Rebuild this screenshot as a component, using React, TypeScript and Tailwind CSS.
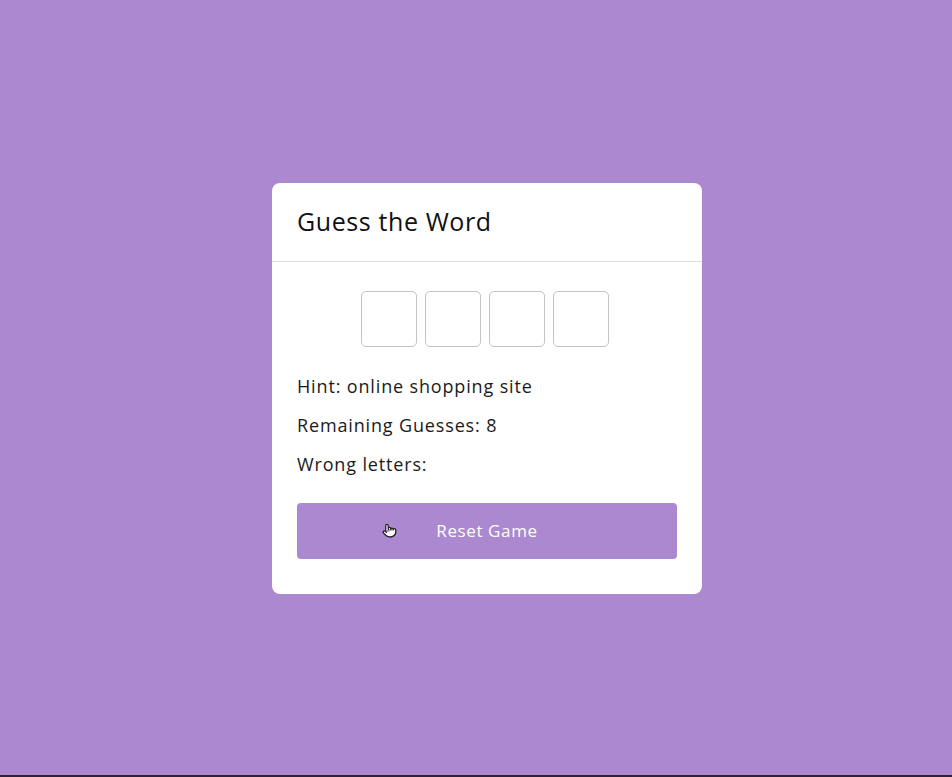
import { Pointer } from 'lucide-react';

const letters = ['', '', '', ''];

export default function App() {
    return (
        <div
            className="h-[777px] w-full bg-[#ab88cf] border-b-2 border-[#2b2433] flex items-center justify-center pl-[22px] pt-[2px]"
            style={{ fontFamily: '"Open Sans", "Noto Sans", sans-serif' }}
        >
            <div className="w-[430px] bg-white rounded-lg">
                {/* Header */}
                <div className="h-[79px] px-[25px] flex items-center border-b border-[#dddddd]">
                    <h1 className="text-[25px] font-medium text-[#111] tracking-[0.6px]">Guess the Word</h1>
                </div>

                {/* Body */}
                <div className="px-[25px] pt-[29px] pb-[35px]">
                    <div className="flex justify-center gap-2 pr-1">
                        {letters.map((l, i) => (
                            <div
                                key={i}
                                className="w-14 h-14 border border-[#c4c4c4] rounded-[5px] flex items-center justify-center text-2xl"
                            >
                                {l}
                            </div>
                        ))}
                    </div>

                    <div className="mt-[26px] text-[18px] leading-[27px] tracking-[0.85px] text-[#1a1a1a]">
                        <p>Hint: online shopping site</p>
                        <p className="mt-3">Remaining Guesses: 8</p>
                        <p className="mt-3">Wrong letters:</p>
                    </div>

                    <div className="relative mt-[25px]">
                        <button className="w-full h-14 bg-[#ab88cf] rounded text-white text-[17px] tracking-[0.6px] font-medium">
                            Reset Game
                        </button>
                        <Pointer
                            className="absolute left-[85px] top-[20px] text-[#222] fill-white pointer-events-none"
                            size={15}
                            strokeWidth={2}
                        />
                    </div>
                </div>
            </div>
        </div>
    );
}
